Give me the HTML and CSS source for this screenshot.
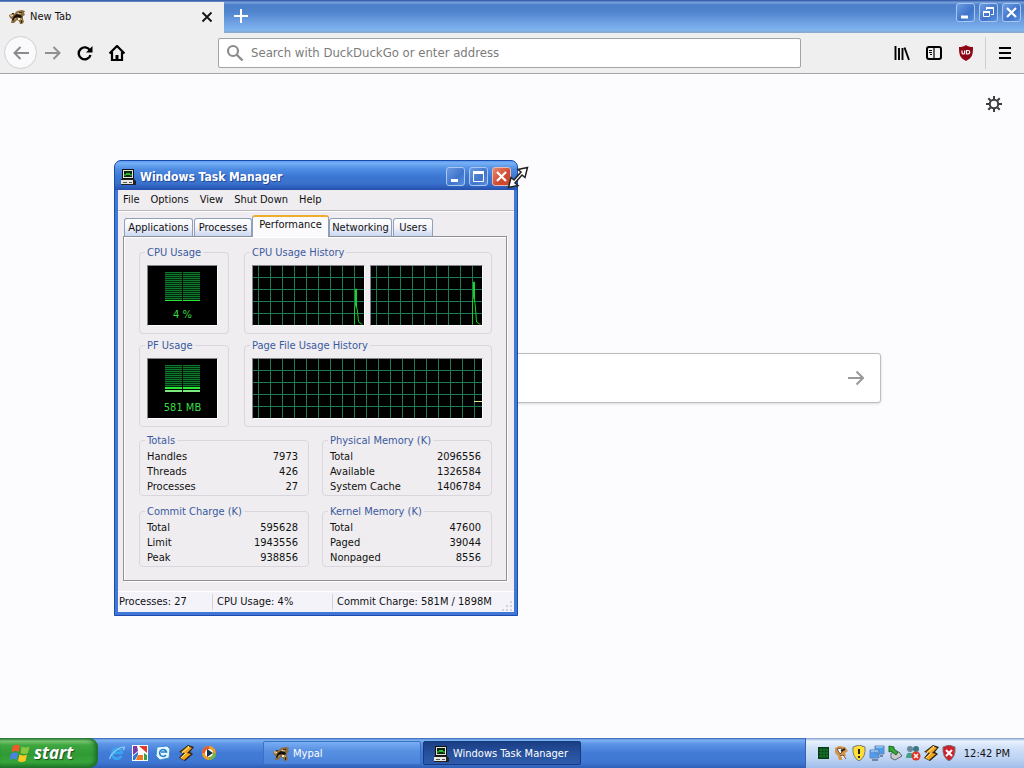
FILE: index.html
```html
<!DOCTYPE html>
<html lang="en">
<head>
<meta charset="utf-8">
<meta name="viewport" content="width=device-width, initial-scale=1">
<title>New Tab</title>
<link rel="stylesheet" href="styles.css">
</head>
<body>
<svg width="0" height="0" class="defs" aria-hidden="true">
  <symbol id="cat" viewBox="0 0 16 16"><path d="M0 6l4-2 1 1 3-3 5-1 3 1-1 2 1 2-2 1 0 3 1 3-2 2h-2l-1-3-2-1-3 3H2l1-4-2-1z" fill="#8b6b3c"/><path d="M1 5l3 1-1 2-2-1zM8 4l3-1 1 2-3 1zM4 9l2-1 1 2-2 1zM11 9l2 1-1 2z" fill="#d6b684"/><path d="M5 7l3-2 4 1 1 2-2 1-2-1-3 1-2 3-1-1z" fill="#15100a"/><path d="M3 4h2v1H3zM10 3h3v1h-3zM12 11h1v3h-1z" fill="#3c2a14"/><path d="M3 6h1v1H3zM9 9h2v2H9z" fill="#f2ead0"/></symbol>
  <symbol id="pc" viewBox="0 0 16 16"><path d="M2 0h12v10H2z" fill="#111"/><path d="M3 1h10v8H3z" fill="#e4e4dc"/><path d="M4 2h8v6H4z" fill="#062806"/><path d="M4 6h2l1-2 1 2 1-2 1 2h2" fill="none" stroke="#35d845"/><path d="M1 10h13l2 2v4H1z" fill="#222"/><path d="M1 11h12v4H1z" fill="#e8e8e0"/><path d="M3 13.500h4M9 13.500h3" stroke="#555"/></symbol>
  <symbol id="winamp" viewBox="0 0 16 16"><path d="M10 0l6 2-4 5 3 2-8 7-6-3 4-5-4-1z" fill="#2b2114"/><path d="M10 1l4 2-5 5 4 1-7 6-4-2 5-5-4-1z" fill="#f4a51c"/><path d="M10 1l1 1-7 6M8 8L3 13" fill="none" stroke="#ffe89a"/></symbol>
</svg>

<div class="browser">
  <header class="tabstrip">
    <div class="tab"><svg class="i16"><use href="#cat"/></svg><span>New Tab</span>
      <button class="plain tab-close" aria-label="Close tab"><svg width="12" height="12" viewBox="0 0 12 12"><path d="M1.500 1.500l9 9M10.500 1.500l-9 9" stroke="#111" stroke-width="1.800"/></svg></button></div>
    <button class="plain newtab" aria-label="New tab"><svg width="14" height="14" viewBox="0 0 14 14"><path d="M7 0v14M0 7h14" stroke="#fff" stroke-width="2"/></svg></button>
    <div class="winbtns">
      <button class="wbtn" aria-label="Minimize"><svg viewBox="0 0 17 17"><path d="M4 13h7" stroke="#fff" stroke-width="3"/></svg></button>
      <button class="wbtn" aria-label="Restore"><svg viewBox="0 0 17 17"><path d="M6.500 6V4.500h7v6H11M3.500 7.500h6v5h-6z" fill="none" stroke="#fff"/><path d="M6 4h8M3 8h7" stroke="#fff" stroke-width="2"/></svg></button>
      <button class="wbtn" aria-label="Close"><svg viewBox="0 0 17 17"><path d="M4 4l9 9M13 4l-9 9" stroke="#fff" stroke-width="2.200"/></svg></button>
    </div>
  </header>
  <nav class="toolbar">
    <button class="plain back" aria-label="Back"><svg width="16" height="16" viewBox="0 0 16 16"><path d="M16 8H1.500M7.500 2l-6 6 6 6" fill="none" stroke="#8b8b8b" stroke-width="2"/></svg></button>
    <button class="plain tool" aria-label="Forward"><svg width="16" height="16" viewBox="0 0 16 16"><path d="M0 8h14.500M8.500 2l6 6-6 6" fill="none" stroke="#909090" stroke-width="2"/></svg></button>
    <button class="plain tool" aria-label="Reload"><svg width="16" height="16" viewBox="0 0 16 16"><path d="M13 5.500A6 6 0 1 0 13.500 10" fill="none" stroke="#000" stroke-width="2.400"/><path d="M15.500 1v6.500H9z"/></svg></button>
    <button class="plain tool" aria-label="Home"><svg width="16" height="16" viewBox="0 0 16 16"><path d="M.5 8.500L8 1l7.500 7.500M3 7v8h10V7" fill="none" stroke="#000" stroke-width="2.200"/><path d="M6.500 15v-5h3v5z"/></svg></button>
    <label class="urlbar"><svg width="18" height="18" viewBox="0 0 18 18"><circle cx="7" cy="7" r="5" fill="none" stroke="#8c8c8c" stroke-width="2.200"/><path d="M10.500 10.500l6 6" stroke="#8c8c8c" stroke-width="2.400"/></svg><input type="text" aria-label="Address" placeholder="Search with DuckDuckGo or enter address"></label>
    <div class="tools">
      <button class="plain tool" aria-label="Library"><svg width="16" height="16" viewBox="0 0 16 16"><path d="M1.500 1v14M5 3v12M8.500 3v12M10.500 2.500L15 15" stroke="#000" stroke-width="1.900"/></svg></button>
      <button class="plain tool" aria-label="Sidebars"><svg width="16" height="16" viewBox="0 0 16 16"><rect x="1" y="2" width="14" height="12" rx="2" fill="none" stroke="#000" stroke-width="2"/><path d="M8 2v12" stroke="#000" stroke-width="1.200"/><path d="M3 5.500h3M3 7.500h3M4 9.500h2" stroke="#000"/></svg></button>
      <button class="plain tool" aria-label="Content blocker"><svg width="16" height="16" viewBox="0 0 16 16"><path d="M8 0c2 1.500 4 2 7 2 0 8-1 11-7 14C2 13 1 10 1 2c3 0 5-.5 7-2z" fill="#8d0613"/><path d="M4 5.500v2.200q0 1.300 1.300 1.300t1.300-1.300V5.500M8.500 5.500H10a1.700 1.700 0 0 1 0 3.500H8.500z" fill="none" stroke="#fff" stroke-width="1.200"/></svg></button>
      <button class="plain menu-btn" aria-label="Menu"><svg width="12" height="12" viewBox="0 0 12 12"><path d="M0 1h12M0 6h12M0 11h12" stroke="#000" stroke-width="2"/></svg></button>
    </div>
  </nav>
  <main class="page">
    <button class="plain gear" aria-label="Customize"><svg width="16" height="16" viewBox="0 0 16 16"><circle cx="8" cy="8" r="4.200" fill="none" stroke="#3d3d40" stroke-width="2"/><path d="M8 0v3M8 13v3M0 8h3M13 8h3M2.300 2.300l2.200 2.200M11.500 11.500l2.200 2.200M2.300 13.700l2.200-2.200M11.500 4.500l2.200-2.200" stroke="#3d3d40" stroke-width="2"/></svg></button>
    <form class="search"><input type="text" aria-label="Search the web"><button type="button" class="plain" aria-label="Search"><svg width="16" height="16" viewBox="0 0 16 16"><path d="M0 8h15M8.500 1.500L15 8l-6.500 6.500" fill="none" stroke="#999" stroke-width="2"/></svg></button></form>
  </main>
</div>

<section class="window" aria-label="Windows Task Manager">
  <header class="titlebar"><svg class="i16"><use href="#pc"/></svg><h1>Windows Task Manager</h1>
    <div class="winbtns">
      <button class="wbtn" aria-label="Minimize"><svg viewBox="0 0 17 17"><path d="M4 12.500h7" stroke="#fff" stroke-width="3"/></svg></button>
      <button class="wbtn" aria-label="Maximize"><svg viewBox="0 0 17 17"><path d="M3.500 4.500h10v9h-10z" fill="none" stroke="#fff"/><path d="M3 4.500h11" stroke="#fff" stroke-width="3"/></svg></button>
      <button class="wbtn red" aria-label="Close"><svg viewBox="0 0 17 17"><path d="M4 4l9 9M13 4l-9 9" stroke="#fff" stroke-width="2.200"/></svg></button>
    </div>
  </header>
  <div class="client">
    <nav class="menubar"><button class="plain">File</button><button class="plain">Options</button><button class="plain">View</button><button class="plain">Shut Down</button><button class="plain">Help</button></nav>
    <div class="body">
      <div class="tabs" role="tablist">
        <button role="tab" class="t-app">Applications</button><button role="tab" class="t-proc">Processes</button><button role="tab" class="t-perf active" aria-selected="true">Performance</button><button role="tab" class="t-net">Networking</button><button role="tab" class="t-user">Users</button>
      </div>
      <div class="pane">
        <div class="row charts">
          <fieldset class="narrow"><legend>CPU Usage</legend><div class="meter">
            <div class="cols"><div class="col"><i class="dim cpu"></i><i class="thin"></i></div><div class="col"><i class="dim cpu"></i><i class="thin"></i></div></div><span>4 %</span></div></fieldset>
          <fieldset class="wide"><legend>CPU Usage History</legend><div class="graphs">
            <div class="graph"><svg width="12" height="44" viewBox="0 0 12 44"><path d="M2.500 43V28l1-4V8h1v18l1 4 1 11 3 2h1" fill="none" stroke="#16d326"/></svg></div>
            <div class="graph"><svg width="12" height="44" viewBox="0 0 12 44"><path d="M2.500 43V20l1-4V1h1v18l1 8 1 14 3 2h1" fill="none" stroke="#16d326"/></svg></div></div></fieldset>
        </div>
        <div class="row files">
          <fieldset class="narrow"><legend>PF Usage</legend><div class="meter">
            <div class="cols"><div class="col"><i class="dim pf"></i><i class="thick"></i><i class="thick pale"></i></div><div class="col"><i class="dim pf"></i><i class="thick"></i><i class="thick pale"></i></div></div><span>581 MB</span></div></fieldset>
          <fieldset class="wide"><legend>Page File Usage History</legend><div class="graphs"><div class="graph"><svg width="8" height="18" viewBox="0 0 8 18"><path d="M0 1.500h8" stroke="#e6e68a"/></svg></div></div></fieldset>
        </div>
        <div class="row stats">
          <fieldset><legend>Totals</legend><table><tr><th>Handles</th><td>7973</td></tr><tr><th>Threads</th><td>426</td></tr><tr><th>Processes</th><td>27</td></tr></table></fieldset>
          <fieldset><legend>Physical Memory (K)</legend><table><tr><th>Total</th><td>2096556</td></tr><tr><th>Available</th><td>1326584</td></tr><tr><th>System Cache</th><td>1406784</td></tr></table></fieldset>
        </div>
        <div class="row stats">
          <fieldset><legend>Commit Charge (K)</legend><table><tr><th>Total</th><td>595628</td></tr><tr><th>Limit</th><td>1943556</td></tr><tr><th>Peak</th><td>938856</td></tr></table></fieldset>
          <fieldset><legend>Kernel Memory (K)</legend><table><tr><th>Total</th><td>47600</td></tr><tr><th>Paged</th><td>39044</td></tr><tr><th>Nonpaged</th><td>8556</td></tr></table></fieldset>
        </div>
      </div>
    </div>
    <footer class="status"><span class="s1">Processes: 27</span><span class="s2">CPU Usage: 4%</span><span class="s3">Commit Charge: 581M / 1898M</span><svg class="grip" width="12" height="12" viewBox="0 0 12 12"><path d="M8 1h2v2H8zM4 5h2v2H4zM8 5h2v2H8zM0 9h2v2H0zM4 9h2v2H4zM8 9h2v2H8z" fill="#d3d1da"/></svg></footer>
  </div>
</section>
<svg class="cursor" width="22" height="24" viewBox="0 0 22 24"><path d="M20.500 1.500l-9.500 2 3 2.500-7 8-3-2.500-2.500 10 9.500-2-3-2.500 7-8 3 2.500z" fill="#fff" stroke="#222" stroke-width="1.500"/></svg>

<footer class="taskbar">
  <button class="start"><svg width="23" height="20" viewBox="0 0 23 20"><path d="M4 3q4-3 7 0L9.500 9q-3-2-7 0z" fill="#ef5a28"/><path d="M12.500 3.500q4 2 8 0L19 10q-4 2-7.500 0z" fill="#86c940"/><path d="M2 10.500q4-2 7 0L7.500 17q-3-3-7 0z" fill="#4b82e6"/><path d="M10.500 11.500q4 2 7.500 0L16.500 18q-4 2-7.500 0z" fill="#fcc824"/></svg><span>start</span></button>
  <div class="quick">
    <button class="plain" aria-label="Internet Explorer"><svg class="i16" viewBox="0 0 16 16"><path d="M12.500 11A5 5 0 1 1 13 8H4" fill="none" stroke="#39a5ee" stroke-width="2.600"/><path d="M1 14C0 11 9 2 15 2c1 1-1 3-1 3" fill="none" stroke="#8fd5fb" stroke-width="1.200"/></svg></button>
    <button class="plain" aria-label="Media viewer"><svg class="i16" viewBox="0 0 16 16"><path d="M0 0h16v16H0z" fill="#fff"/><path d="M1 1h4l1 5-5 4z" fill="#7a3aa8"/><path d="M7 1h8v7z" fill="#e23b2a"/><path d="M1 11l5-4v3l-3 5H1z" fill="#3577d7"/><path d="M6 10h5v5H4z" fill="#ef7b20"/><path d="M12 8l3 2v5h-3z" fill="#37a446"/></svg></button>
    <button class="plain" aria-label="Outlook Express"><svg class="i16" viewBox="0 0 16 16"><path d="M2 2l10-1 3 3-1 9-9 2-4-4z" fill="#e8f5ff" stroke="#3d8ccb"/><path d="M11 10a3.500 3.500 0 1 1 .5-3H6" fill="none" stroke="#2381c9" stroke-width="1.600"/></svg></button>
    <button class="plain" aria-label="Winamp"><svg class="i16"><use href="#winamp"/></svg></button>
    <button class="plain" aria-label="Media Player"><svg class="i16" viewBox="0 0 16 16"><circle cx="8" cy="8" r="5.500" fill="#fff" stroke="#f39a25" stroke-width="3"/><path d="M8 1a7 7 0 0 0-7 7h3a4 4 0 0 1 4-4z" fill="#e75b2b"/><path d="M8 15a7 7 0 0 0 7-7h-3a4 4 0 0 1-4 4z" fill="#69b843"/><path d="M6 4l6 4-6 4z" fill="#17324f"/></svg></button>
  </div>
  <div class="tasks">
    <button class="task"><svg class="i16"><use href="#cat"/></svg>Mypal</button>
    <button class="task pressed"><svg class="i16"><use href="#pc"/></svg>Windows Task Manager</button>
  </div>
  <div class="tray">
    <svg class="i16" viewBox="0 0 16 16"><path d="M3 2h11v12H3z" fill="#073d12"/><path d="M4 5h9M4 8h9M4 11h9M6 3v10M9 3v10M12 3v10" stroke="#1b7a2e"/></svg>
    <svg class="i16" viewBox="0 0 16 16"><path d="M2 3l4-2 6 1 3 4-3 2 1 3-4 1v3H6l-1-4-3-3z" fill="#d59345"/><path d="M4 4l4-1 2 3-3 3zM7 11l3-1 3 4" fill="#fff" stroke="#68513f"/><path d="M8 6l4-2" stroke="#31251c" stroke-width="2"/></svg>
    <svg class="i16" viewBox="0 0 16 16"><path d="M8 0l6 2q1 10-6 14Q1 12 2 2z" fill="#ffdf35" stroke="#777"/><path d="M8 4v5M8 11v2" stroke="#222" stroke-width="2"/></svg>
    <svg class="i16" viewBox="0 0 16 16"><path d="M6 1h9v8H6zM1 5h9v8H1z" fill="#4d9df0" stroke="#6a86ad"/><path d="M2 6h7M7 2h7" stroke="#bce2ff"/><path d="M3 15h6M11 11h3" stroke="#6e86a7" stroke-width="2"/></svg>
    <svg class="i16" viewBox="0 0 16 16"><path d="M4 8l8-1 3 4-7 4-4-2z" fill="#c7cbd0" stroke="#666"/><path d="M2 1l5 1v2l4 3-2 3-5-4-2 1z" fill="#39a539" stroke="#176d22"/></svg>
    <svg class="i16" viewBox="0 0 16 16"><circle cx="5" cy="4" r="3" fill="#668a99"/><circle cx="11" cy="4" r="3" fill="#397786"/><path d="M1 13q0-6 5-5l3 1 3-2 3 6z" fill="#43a18b"/><circle cx="11" cy="11" r="4.500" fill="#df3424"/><path d="M9 9l4 4M13 9l-4 4" stroke="#fff" stroke-width="1.500"/></svg>
    <svg class="i16"><use href="#winamp"/></svg>
    <svg class="i16" viewBox="0 0 16 16"><path d="M8 0l6 2q1 10-6 14Q1 12 2 2z" fill="#cf202d" stroke="#777"/><path d="M5 5l6 6M11 5l-6 6" stroke="#fff" stroke-width="2"/></svg>
    <time>12:42 PM</time>
  </div>
</footer>
</body>
</html>
```
FILE: styles.css
```css
* { box-sizing: border-box; }
body {
  margin: 0; height: 100vh; display: flex; flex-direction: column; overflow: hidden;
  font: 11px/14px Tahoma, "DejaVu Sans Condensed", "DejaVu Sans", sans-serif;
  color: #111; background: #fcfbfe;
}
button, input { font: inherit; color: inherit; margin: 0; }
button { padding: 0; white-space: nowrap; }
svg { display: block; flex: none; }
.defs { position: absolute; }
.i16 { width: 16px; height: 16px; }
.plain { border: 0; background: none; display: flex; align-items: center; justify-content: center; }

.browser { flex: 1; display: flex; flex-direction: column; min-height: 0; }
.tabstrip {
  height: 33px; display: flex; align-items: stretch;
  background: linear-gradient(#3a62ad 0 1px, #7da6de 2px, #4b7fc9 5px, #5085cd 12px, #6d9fe2 22px, #80b4ef 30px, #8aa9c8 33px);
}
.tab {
  width: 224px; margin-top: 2px; padding: 0 11px 1px 9px; background: #efeff0;
  display: flex; align-items: center; gap: 5px;
}
.tab-close { margin-left: auto; }
.newtab { width: 34px; padding-bottom: 1px; }
.winbtns { margin-left: auto; display: flex; gap: 4px; }
.tabstrip .winbtns { padding: 3px 3px 0 0; }
.wbtn {
  width: 19px; height: 19px; border: 1px solid #a9c6ee; border-radius: 3px;
  background: linear-gradient(135deg, #6b9be2, #3f74cb 60%, #5a90e0);
}
.wbtn.red { border-color: #e9b9b4; background: linear-gradient(135deg, #e58a70, #d0492e 60%, #c9492f); }
.toolbar {
  height: 41px; display: flex; align-items: center; background: #efeff0;
  border-bottom: 1px solid #a5a4a8; padding: 0 0 1px 4px;
}
.back { width: 33px; height: 33px; border: 1px solid #cfcfd2; border-radius: 50%; background: #faf9fb; }
.tool { width: 32px; height: 32px; }
.urlbar {
  flex: 0 1 583px; height: 30px; margin-left: 85px; padding: 0 7px;
  display: flex; align-items: center; gap: 7px;
  border: 1px solid #a3a3a8; border-radius: 2px; background: #fff;
}
.urlbar input { flex: 1; min-width: 0; border: 0; padding: 1px 0 0; outline: 0; background: none; font-size: 13px; line-height: 18px; }
.urlbar input::placeholder { color: #7b7b7b; opacity: 1; }
.tools { margin-left: auto; display: flex; align-items: center; }
.menu-btn { width: 39px; height: 32px; border-left: 1px solid #cfcfd2; margin-left: 3px; }
.page { flex: 1; display: flex; flex-direction: column; align-items: center; background: #fcfbfe; }
.gear { align-self: flex-end; margin: 22px 22px 0 0; }
.search {
  width: 72%; height: 50px; margin-top: 241px; display: flex;
  background: #fff; border: 1px solid #bdbcc0; border-radius: 3px; box-shadow: 0 1px 3px #0002;
}
.search input { flex: 1; border: 0; background: none; padding: 0 16px; outline: 0; }
.search button { width: 48px; }

.window {
  position: absolute; left: 114px; top: 160px; width: 404px;
  border-radius: 7px 7px 0 0; padding: 0 3px 3px;
  background: #3f78d8; border: 1px solid #1d4bac;
}
.titlebar {
  height: 29px; margin: 0 -3px; padding: 2px 6px 0 5px; display: flex; align-items: center; gap: 4px;
  border-radius: 6px 6px 0 0;
  background: linear-gradient(#5b9af0 0, #76b0f6 2px, #4f8de4 8px, #3b76d2 16px, #3a72cc 22px, #2e5fbd 26px, #2750ab 29px);
}
.titlebar h1 { margin: 0; padding-top: 1px; font: bold 12px/16px "Trebuchet MS", "DejaVu Sans Condensed", sans-serif; color: #fff; text-shadow: 1px 1px #24489a; }
.client { background: #efedf0; }
.menubar { height: 21px; display: flex; gap: 11px; padding: 0 5px; border-bottom: 1px solid #b9b7bd; }
.body { padding: 3px 7px 10px 5px; border-top: 1px solid #fff; }
.tabs { display: flex; align-items: flex-end; padding-left: 1px; }
.tabs button {
  height: 18px; border: 1px solid #91a0b8; border-bottom: 0; border-radius: 3px 3px 0 0;
  background: linear-gradient(#fff, #f3f4fb 50%, #c9d8f3);
}
.tabs .t-app { width: 69px; margin-right: 1px; }
.tabs .t-proc { width: 58px; }
.tabs .t-perf { width: 77px; }
.tabs .t-net { width: 63px; margin-right: 1px; }
.tabs .t-user { width: 40px; }
.tabs .active {
  height: 22px; margin-bottom: -1px; padding-bottom: 4px; z-index: 1;
  border-top: 2px solid #f0ac2c; background: #fbfafc;
}
.pane { border: 1px solid #8f9096; padding: 8px 14px 13px 15px; box-shadow: inset 1px 1px #fff, 1px 1px #fff; }
.row { display: grid; }
.charts, .files { grid-template-columns: 90px 1fr; gap: 15px; }
.charts { margin-bottom: 4px; }
.files { margin-bottom: 6px; }
.stats { grid-template-columns: 1fr 1fr; gap: 13px; }
.stats + .stats { margin-top: 8px; }
fieldset { min-width: 0; margin: 0; border: 1px solid #d9d7dd; border-radius: 4px; padding: 2px 10px 1px 7px; }
.narrow { padding: 6px 10px 7px 7px; }
.wide { padding: 6px 8px 7px 7px; }
legend { padding: 0 2px; margin-left: -2px; color: #3a5a9f; height: 14px; line-height: 16px; }
.meter, .graph { height: 61px; border: 1px solid; border-color: #85848a #fff #fff #85848a; background-color: #000; }
.meter { color: #38dc44; display: flex; flex-direction: column; align-items: center; justify-content: space-between; padding: 6px 0 3px; }
.cols { display: flex; gap: 1px; }
.col { width: 17px; display: flex; flex-direction: column; }
.dim { background: repeating-linear-gradient(#0d7a2e 0 1px, #04260c 1px 2px); }
.cpu { height: 28px; }
.pf { height: 22px; }
.thin { height: 1px; background: #2bea35; }
.thick { height: 2px; background: #2bea35; }
.pale { margin-top: 1px; background: #7dea80; }
.graphs { display: flex; gap: 5px; }
.graph {
  flex: 1; display: flex; align-items: flex-end; justify-content: flex-end;
  background-image: linear-gradient(transparent 11px, #1f7b53 11px), linear-gradient(90deg, #1f7b53 1px, transparent 1px);
  background-size: 12px 12px; background-position: 5px 0;
}
table { width: 100%; border-collapse: collapse; line-height: 15px; }
th, td { padding: 0; font-weight: normal; text-align: left; }
td { text-align: right; }
.status { height: 21px; display: flex; align-items: center; background: #f4f3fa; border-top: 1px solid #fff; }
.status span { padding-left: 4px; line-height: 16px; }
.status .s1 { width: 94px; padding-left: 1px; }
.status .s2 { width: 120px; border-left: 1px solid #d3d1da; }
.status .s3 { border-left: 1px solid #d3d1da; }
.grip { margin-left: auto; align-self: flex-end; }
.cursor { position: absolute; left: 507px; top: 166px; }

.taskbar {
  height: 30px; display: flex; align-items: stretch;
  background: linear-gradient(#2f61b4 0, #7fb2f2 2px, #5c94e6 6px, #427bd6 15px, #3f78d4 24px, #2f60b8 30px);
}
.start {
  width: 98px; border: 0; border-radius: 0 9px 9px 0; padding: 0 0 1px 9px;
  display: flex; align-items: center; gap: 2px; color: #fff;
  background: linear-gradient(#2f7a3a 0, #7ccb74 3px, #3fa640 7px, #2f9a34 16px, #37a53a 24px, #1f7a2a 30px);
  box-shadow: inset -3px 0 4px #1d6b2a;
}
.start span { font: italic bold 17px/20px "Open Sans", sans-serif; text-shadow: 1px 1px 1px #1d4d20; }
.quick { display: flex; align-items: center; gap: 7px; padding-left: 11px; }
.tasks { display: flex; align-items: center; gap: 2px; margin-left: 46px; flex: 1; }
.task {
  width: 158px; height: 24px; border: 1px solid #3b70c6; border-radius: 2px; padding: 1px 9px 0;
  display: flex; align-items: center; gap: 4px; color: #fff; overflow: hidden;
  background: linear-gradient(#79aef4, #5890e2 40%, #4a83da);
}
.task.pressed { border-color: #153a80; background: linear-gradient(#1b3f86, #28529f 60%, #2d5bab); }
.tray {
  display: flex; align-items: center; gap: 2px; padding: 0 14px 0 9px;
  background: linear-gradient(#7d9dcf 0, #eaf3ff 3px, #cfe0f8 10px, #bfd4f4 20px, #a0bdea 30px);
  border-left: 1px solid #3562b1;
}
.tray time { margin-left: 5px; padding-top: 1px; }
```
